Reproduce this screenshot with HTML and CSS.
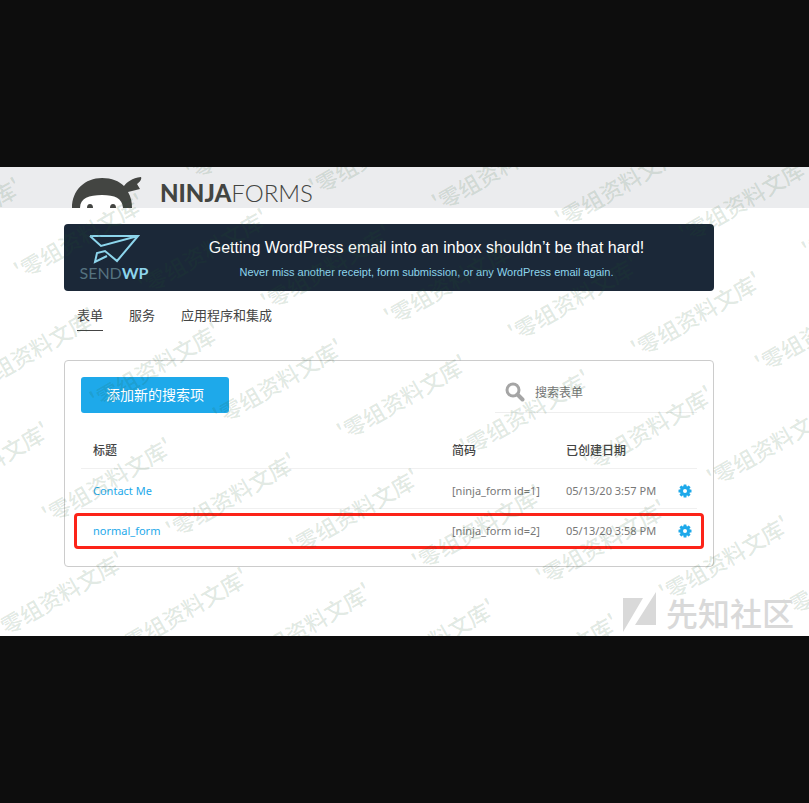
FILE: index.html
```html
<!DOCTYPE html>
<html lang="zh-CN">
<head>
<meta charset="utf-8">
<title>Ninja Forms</title>
<link rel="stylesheet" href="styles.css">
</head>
<body>
<main class="page">
  <header class="masthead">
    <svg class="ninja" viewBox="0 0 72 32" aria-hidden="true">
      <path d="M0 32C0 14 13 2 30 2C40 2 47 5 52 10C55 6 60 2 69 1C70 3 68 6 65 8L68 13C64 14 60 15 56 16C59 21 60 26 60 32Z" fill="#434542"/>
      <path d="M8 32C8 22 17 19 30 19S50 22 51 32Z" fill="#fff"/>
      <path d="M15 32a3 4 0 0 1 6 0zM38 32a3 4 0 0 1 6 0z" fill="#434542"/>
    </svg>
    <h1 class="wordmark"><b>NINJA</b>FORMS</h1>
  </header>
  <div class="content">
    <a class="banner" href="#sendwp">
      <span class="sendwp">
        <svg class="plane" viewBox="0 0 52 30" aria-hidden="true">
          <path d="M2 2L50 2L29 27L17 17L9 19L7 28L19 22M2 2L13 12L50 2" fill="none" stroke="#8dd5ec" stroke-width="2"/>
        </svg>
        <span class="sendwp-name">SEND<b>WP</b></span>
      </span>
      <span class="pitch">
        <strong class="pitch-title">Getting WordPress email into an inbox shouldn’t be that hard!</strong>
        <span class="pitch-text">Never miss another receipt, form submission, or any WordPress email again.</span>
      </span>
    </a>
    <nav class="tabs">
      <a class="tab tab-active" href="#forms">表单</a>
      <a class="tab" href="#services">服务</a>
      <a class="tab" href="#apps">应用程序和集成</a>
    </nav>
    <section class="card">
      <div class="toolbar">
        <button class="add" type="button">添加新的搜索项</button>
        <label class="search">
          <svg class="lens" viewBox="0 0 20 20" aria-label="搜索">
            <circle cx="8" cy="8" r="6" fill="none" stroke="#a5a5a5" stroke-width="3"/>
            <path d="M12.500 12.500L17.500 17.500" stroke="#a5a5a5" stroke-width="4" stroke-linecap="round"/>
          </svg>
          <input class="search-input" type="search" placeholder="搜索表单">
        </label>
      </div>
      <table class="forms">
        <thead>
          <tr><th class="col-title">标题</th><th class="col-code">简码</th><th class="col-date">已创建日期</th><th class="col-gear"></th></tr>
        </thead>
        <tbody>
          <tr>
            <td><a href="#form-1">Contact Me</a></td><td>[ninja_form id=1]</td><td>05/13/20 3:57 PM</td>
            <td><button class="gear" type="button" aria-label="设置"><svg viewBox="-7 -7 14 14"><use href="#gear-shape"/></svg></button></td>
          </tr>
          <tr class="marked">
            <td><a href="#form-2">normal_form</a></td><td>[ninja_form id=2]</td><td>05/13/20 3:58 PM</td>
            <td><button class="gear" type="button" aria-label="设置"><svg viewBox="-7 -7 14 14"><use href="#gear-shape"/></svg></button></td>
          </tr>
        </tbody>
      </table>
    </section>
  </div>
  <svg class="stamps" aria-hidden="true"></svg>
  <div class="credit">
    <svg class="credit-mark" viewBox="0 0 34 40" aria-hidden="true"><path d="M0 6H20L0 40ZM33 0V33H12Z" fill="#d9d9d9"/></svg>
    <span>先知社区</span>
  </div>
</main>
<svg class="defs" aria-hidden="true">
  <defs>
    <g id="gear-shape" fill="#1ea9ea">
      <g id="teeth"><rect x="-1.500" y="-6.500" width="3" height="13" rx="0.500"/><rect x="-6.500" y="-1.500" width="13" height="3" rx="0.500"/></g>
      <use href="#teeth" transform="rotate(45)"/>
      <circle r="5"/>
      <circle r="2" fill="#fff"/>
    </g>
  </defs>
</svg>
<script src="stamps.js"></script>
</body>
</html>
```
FILE: stamps.js
```js
// Repeats the slanted library stamp on a skewed grid over the page.
const layer = document.querySelector('.stamps');
for (let row = -1; row <= 5; row++) {
  for (let col = -5; col <= 7; col++) {
    const x = Math.round(432 + 123.4 * col - 47.7 * row);
    const y = Math.round(34 + 15.6 * col + 114.3 * row);
    if (x < -130 || x > 808 || y < 0 || y > 530) continue;
    const t = document.createElementNS('http://www.w3.org/2000/svg', 'text');
    t.setAttribute('transform', `translate(${x} ${y}) rotate(-30)`);
    t.setAttribute('y', 14);
    t.textContent = "'零组资料文库'";
    layer.append(t);
  }
}
```
FILE: styles.css
```css
* { box-sizing: border-box; }

body {
  margin: 0;
  min-height: 100vh;
  display: flex;
  flex-direction: column;
  justify-content: center;
  background: #0d0d0d;
  color: #444;
  font: 12px/16px "Noto Sans", "Noto Sans CJK SC", sans-serif;
}

a { color: #1ea9ea; text-decoration: none; }

.page {
  position: relative;
  overflow: hidden;
  background: #fff;
  padding-bottom: 69px;
}

.masthead {
  display: flex;
  align-items: flex-end;
  gap: 16px;
  height: 41px;
  padding-left: 72px;
  background: #ebecee;
}

.ninja { width: 72px; height: 32px; }

.wordmark {
  margin: 0;
  font: 300 24px/30px Lato, sans-serif;
  color: #434542;
}

.wordmark b { font-weight: 900; }

.content { padding: 16px 95px 0 64px; }

.banner {
  display: flex;
  align-items: center;
  height: 67px;
  padding: 0 16px;
  border-radius: 4px;
  background: #1b2838;
}

.sendwp {
  display: flex;
  flex-direction: column;
  align-items: center;
  width: 68px;
}

.plane { width: 52px; height: 30px; }

.sendwp-name {
  font: 16px/18px Lato, sans-serif;
  color: #55727f;
}

.sendwp-name b { color: #8dd5ec; }

.pitch {
  flex: 1;
  display: flex;
  flex-direction: column;
  align-items: center;
  gap: 6px;
  padding: 2px 0 0 7px;
  font-family: "Liberation Sans", sans-serif;
}

.pitch-title { font-size: 16px; line-height: 20px; font-weight: 400; color: #fff; }
.pitch-text { font-size: 11px; line-height: 16px; color: #8dd5ec; }

.tabs {
  display: flex;
  gap: 26px;
  padding: 14px 13px 0;
}

.tab {
  padding-bottom: 4px;
  font-size: 13px;
  line-height: 21px;
  color: #444;
  border-bottom: 1px solid transparent;
}

.tab-active { border-color: #444; }

.card {
  margin-top: 29px;
  padding: 16px 16px 17px;
  border: 1px solid #ccc;
  border-radius: 4px;
}

.toolbar {
  display: flex;
  justify-content: space-between;
  margin-bottom: 16px;
}

.add {
  height: 36px;
  padding: 0 25px;
  border: 0;
  border-radius: 3px;
  background: #1ea9ea;
  color: #fff;
  font: inherit;
  font-size: 14px;
}

.search {
  display: flex;
  align-items: center;
  gap: 10px;
  width: 202px;
  padding: 0 0 5px 10px;
  border-bottom: 1px solid #eee;
}

.lens { width: 20px; height: 20px; }

.search-input {
  flex: 1;
  min-width: 0;
  padding: 2px 0 0;
  border: 0;
  outline: 0;
  background: none;
  font: inherit;
}

.search-input::placeholder { color: #757575; }

.forms {
  width: 100%;
  table-layout: fixed;
  border-collapse: separate;
  border-spacing: 0;
}

.forms th,
.forms td {
  height: 40px;
  padding: 4px 0 0 12px;
  border-bottom: 1px solid #f0f0f0;
  text-align: left;
  white-space: nowrap;
}

.forms th { font-weight: 500; }
.forms td { font-size: 11px; color: #777; }
.forms td a { color: #1ea9ea; }
.forms .col-code { width: 114px; }
.forms .col-date { width: 112px; }
.forms .col-gear { width: 31px; }

.gear {
  display: block;
  width: 14px;
  height: 14px;
  padding: 0;
  border: 0;
  background: none;
}

.gear svg { display: block; }

.marked { position: relative; }

.marked td:first-child::after {
  content: "";
  position: absolute;
  inset: 4px -7px 0 -7px;
  border: 3px solid #fc2318;
  border-radius: 4px;
  pointer-events: none;
}

.stamps {
  position: absolute;
  inset: 0;
  width: 100%;
  height: 100%;
  pointer-events: none;
  font: 500 22px "Noto Sans CJK SC", sans-serif;
  fill: rgba(30, 90, 40, 0.14);
}

.credit {
  position: absolute;
  right: 15px;
  bottom: 4px;
  display: flex;
  align-items: center;
  gap: 9px;
  font: 500 32px/40px "Noto Sans CJK SC", sans-serif;
  color: #d9d9d9;
}

.credit-mark { width: 34px; height: 40px; }

.defs { position: absolute; width: 0; height: 0; }
```
